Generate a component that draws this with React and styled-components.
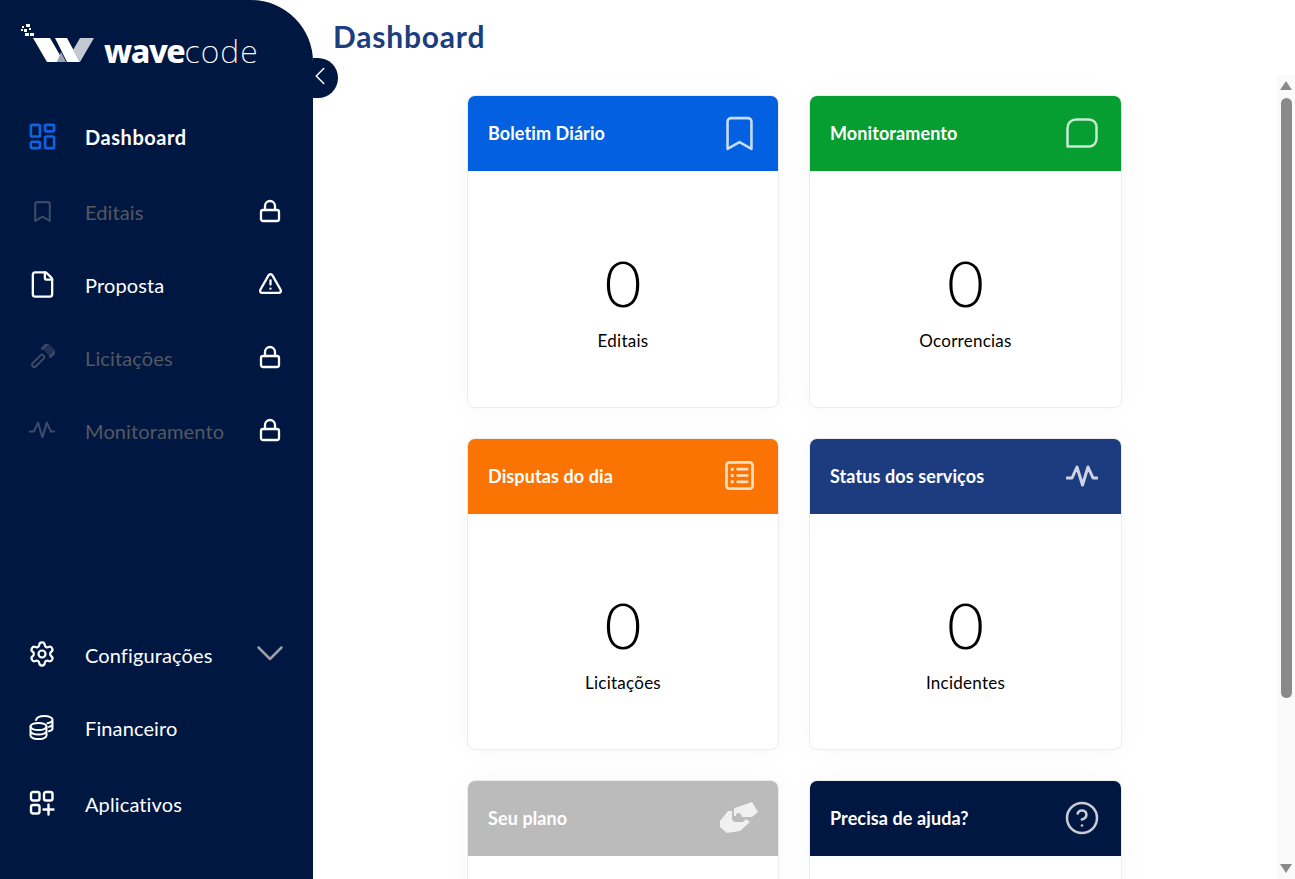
import styled, { createGlobalStyle } from "styled-components"
import {
  Bookmark,
  ChevronLeft,
  CircleHelp,
  File,
  LayoutDashboard,
  Lock,
  Settings,
  TriangleAlert,
} from "lucide-react"

const GlobalStyle = createGlobalStyle`
  html, body, #root {
    margin: 0;
    height: 100%;
  }
  body {
    overflow: hidden;
    font-family: Lato, "Noto Sans", "Liberation Sans", sans-serif;
    background: #fff;
  }
`

function PulseIcon({ width = 32, stroke = 3 }) {
  return (
    <svg width={width} height={(width * 22) / 32} viewBox="0 0 32 22" fill="none" stroke="currentColor" strokeWidth={stroke} strokeLinecap="round" strokeLinejoin="round">
      <path d="M1 13h5l5-11 5.500 18L22 2l5 11h4" />
    </svg>
  )
}

function GavelIcon() {
  return (
    <svg width="26" height="26" viewBox="0 0 26 26" fill="currentColor">
      <g transform="rotate(45 13 13)">
        <rect x="8.500" y="-1" width="9" height="8" fillOpacity="0.55" />
        <rect x="6" y="-2" width="2.600" height="10" rx="1" />
        <rect x="17.400" y="-2" width="2.600" height="10" rx="1" />
        <rect x="10.800" y="11" width="4.400" height="15" rx="1.500" fill="none" stroke="currentColor" strokeWidth="2" />
      </g>
    </svg>
  )
}

function CoinsIcon() {
  return (
    <svg width="26" height="26" viewBox="0 0 26 26" fill="none" stroke="currentColor" strokeWidth="2" strokeLinecap="round">
      <ellipse cx="9.500" cy="12.500" rx="8" ry="3.600" />
      <path d="M1.500 12.500v9c0 2 3.600 3.600 8 3.600s8-1.600 8-3.600v-9M1.500 17c0 2 3.600 3.600 8 3.600s8-1.600 8-3.600" />
      <path d="M7 6c.5-2 3.600-4 8.500-4 4.600 0 8 1.600 8 3.600s-2.200 3.200-5 3.600M23.500 5.600V10c0 1.300-1.600 2.400-3.500 2.900M23.500 10v4.500c0 1.200-1.400 2.200-3.500 2.700" />
    </svg>
  )
}

function AppsPlusIcon() {
  return (
    <svg width="26" height="26" viewBox="0 0 26 26" fill="none" stroke="currentColor" strokeWidth="2.400" strokeLinecap="round" strokeLinejoin="round">
      <rect x="2" y="2" width="8.500" height="8.500" rx="2" />
      <rect x="15" y="2" width="8.500" height="8.500" rx="2" />
      <rect x="2" y="15" width="8.500" height="8.500" rx="2" />
      <path d="M19.500 14.500v10M14.500 19.500h10" />
    </svg>
  )
}

function ChevronWide() {
  return (
    <svg width="26" height="15" viewBox="0 0 26 15" fill="none" stroke="#9c9ea3" strokeWidth="2.500" strokeLinecap="round" strokeLinejoin="round">
      <path d="M1.500 1.500 13 13 24.500 1.500" />
    </svg>
  )
}

function SquareTailIcon() {
  return (
    <svg width="32" height="30" viewBox="0 0 32 30" fill="none" stroke="currentColor" strokeWidth="2.500" strokeLinejoin="round">
      <path d="M1.500 28.500V10a8.500 8.500 0 0 1 8.500-8.500h13A7.500 7.500 0 0 1 30.500 9v12a7.500 7.500 0 0 1-7.500 7.500z" />
    </svg>
  )
}

function ListBoxIcon() {
  return (
    <svg width="29" height="29" viewBox="0 0 30 30" fill="none" stroke="currentColor" strokeWidth="2.800" strokeLinecap="round">
      <rect x="1.500" y="1.500" width="27" height="27" rx="3" />
      <path d="M13 8.500h10M13 15h10M13 21.500h10" />
      <path d="M6 8.500h3M6 15h3M6 21.500h3" strokeWidth="3.200" strokeLinecap="butt" />
    </svg>
  )
}

function HandshakeIcon() {
  return (
    <svg width="40" height="34" viewBox="0 0 40 34" fill="currentColor">
      <path d="M15 8q1-2 4-2L33 1l6 10-6 5H23q-1-4-4-4-2 0-2 3h-2z" />
      <path d="M1 20 9 10h4v7q0 4 4 4h7l3-3 4 3-10 9-13 2-7-6z" />
    </svg>
  )
}

function Logo() {
  return (
    <LogoRow>
      <LogoDots width="14" height="14" viewBox="0 0 14 14" fill="#fff">
        <rect x="1" y="3" width="2" height="2" />
        <rect x="5" y="1" width="4" height="3" />
        <rect x="0" y="6" width="2" height="2" />
        <rect x="3" y="6" width="3" height="3" />
        <rect x="4" y="10" width="4" height="3" />
        <rect x="9" y="10" width="4" height="3" />
        <rect x="8" y="5" width="2" height="2" />
      </LogoDots>
      <svg width="61" height="24" viewBox="0 0 61 24">
        <polygon points="0,0 17,0 31,24 14,24" fill="#fff" />
        <polygon points="22,0 34,0 47,24 34,24" fill="#fff" />
        <polygon points="24,24 33,24 28,14" fill="#9aa3b8" />
        <polygon points="40,12 47,0 61,0 47,24" fill="#c3c8d3" />
      </svg>
      <LogoText><b>wave</b>code</LogoText>
    </LogoRow>
  )
}

const navTop = [
  { label: "Dashboard", icon: <LayoutDashboard size={31} strokeWidth={2} />, iconColor: "#0b63e5", active: true, extra: 2 },
  { label: "Editais", icon: <Bookmark size={25} strokeWidth={2} />, locked: true, muted: true },
  { label: "Proposta", icon: <File size={29} strokeWidth={1.9} />, side: <TriangleAlert size={25} strokeWidth={2.2} /> },
  { label: "Licitações", icon: <GavelIcon />, locked: true, muted: true },
  { label: "Monitoramento", icon: <PulseIcon width={26} stroke={2.600} />, locked: true, muted: true },
]

const navBottom = [
  { label: "Configurações", icon: <Settings size={28} strokeWidth={1.900} />, side: <ChevronWide /> },
  { label: "Financeiro", icon: <CoinsIcon />, extra: 3 },
  { label: "Aplicativos", icon: <AppsPlusIcon /> },
]

const cards = [
  { title: "Boletim Diário", color: "#0360e0", icon: <Bookmark size={41} strokeWidth={1.500} />, value: 0, label: "Editais" },
  { title: "Monitoramento", color: "#079e31", icon: <SquareTailIcon />, value: 0, label: "Ocorrencias" },
  { title: "Disputas do dia", color: "#fb7303", icon: <ListBoxIcon />, value: 0, label: "Licitações" },
  { title: "Status dos serviços", color: "#1c3c7f", icon: <PulseIcon />, value: 0, label: "Incidentes" },
  { title: "Seu plano", color: "#bbbbbb", icon: <HandshakeIcon /> },
  { title: "Precisa de ajuda?", color: "#001742", icon: <CircleHelp size={36} strokeWidth={1.700} /> },
]

function NavItem({ item }) {
  return (
    <NavRow $extra={item.extra}>
      <NavIcon $muted={item.muted} $color={item.iconColor}>{item.icon}</NavIcon>
      <NavLabel $muted={item.muted} $active={item.active}>{item.label}</NavLabel>
      <NavSide>{item.locked ? <Lock size={24} strokeWidth={2.300} /> : item.side}</NavSide>
    </NavRow>
  )
}

export default function App() {
  return (
    <Page>
      <GlobalStyle />
      <Sidebar>
        <Logo />
        <Collapse><ChevronLeft size={30} strokeWidth={1.200} /></Collapse>
        <Nav>
          {navTop.map((item) => <NavItem key={item.label} item={item} />)}
        </Nav>
        <Nav>
          {navBottom.map((item) => <NavItem key={item.label} item={item} />)}
        </Nav>
      </Sidebar>
      <Main>
        <Title>Dashboard</Title>
        <Scroller>
          <CardArea>
            <CardGrid>
              {cards.map((card) => (
                <Card key={card.title}>
                  <CardHead $color={card.color}>
                    <CardTitle>{card.title}</CardTitle>
                    <CardIcon>{card.icon}</CardIcon>
                  </CardHead>
                  <CardBody>
                    {card.label && <Value>{card.value}</Value>}
                    {card.label && <ValueLabel>{card.label}</ValueLabel>}
                  </CardBody>
                </Card>
              ))}
            </CardGrid>
          </CardArea>
          <ScrollTrack>
            <ScrollArrow $dir="up" />
            <ScrollThumb />
            <ScrollArrow $dir="down" />
          </ScrollTrack>
        </Scroller>
      </Main>
    </Page>
  )
}

const Page = styled.div`
  display: flex;
  height: 100vh;
  overflow: hidden;
`

const Sidebar = styled.aside`
  position: relative;
  z-index: 2;
  flex: 0 0 313px;
  display: flex;
  flex-direction: column;
  padding-bottom: 38px;
  box-sizing: border-box;
  background: #001742;
  border-top-right-radius: 62px;
  color: #fff;
`

const LogoRow = styled.div`
  position: relative;
  display: flex;
  align-items: center;
  height: 101px;
  padding: 0 0 1px 33px;
  box-sizing: border-box;
  gap: 10px;
`

const LogoDots = styled.svg`
  position: absolute;
  left: 21px;
  top: 23px;
`

const LogoText = styled.span`
  font-family: "Noto Sans", sans-serif;
  font-size: 32px;
  font-weight: 200;
  letter-spacing: 1.100px;
  b {
    font-weight: 800;
    letter-spacing: -1.400px;
  }
`

const Collapse = styled.div`
  position: absolute;
  top: 58px;
  right: -25px;
  width: 25px;
  height: 40px;
  display: flex;
  align-items: center;
  background: #001742;
  border-radius: 0 20px 20px 0;
  svg {
    flex: none;
    margin: -5px 0 0 -8px;
  }
`

const Nav = styled.nav`
  display: flex;
  flex-direction: column;
  &:last-child {
    margin-top: auto;
  }
`

const NavRow = styled.div`
  display: grid;
  grid-template-columns: 85px 1fr 40px;
  align-items: center;
  height: 73px;
  margin-bottom: ${(p) => p.$extra || 0}px;
  padding-right: 23px;
`

const NavIcon = styled.span`
  display: flex;
  justify-content: center;
  width: 26px;
  margin: -3px 0 0 29px;
  color: ${(p) => p.$color || (p.$muted ? "#3d4a66" : "#fff")};
  svg {
    flex: none;
  }
`

const NavLabel = styled.span`
  margin-top: -2px;
  font-size: 20px;
  font-weight: ${(p) => (p.$active ? 700 : 400)};
  letter-spacing: ${(p) => (p.$active ? 0.55 : 0.12)}px;
  color: ${(p) => (p.$muted ? "#55585f" : "#fff")};
`

const NavSide = styled.span`
  display: flex;
  justify-content: center;
  margin-top: -4px;
`

const Main = styled.main`
  flex: 1;
  min-width: 0;
  display: flex;
  flex-direction: column;
`

const Title = styled.h1`
  margin: 0;
  height: 75px;
  padding: 16px 0 0 20px;
  box-sizing: border-box;
  font-size: 30px;
  line-height: 40px;
  font-weight: 700;
  letter-spacing: 0.8px;
  color: #1c3d7e;
`

const Scroller = styled.div`
  flex: 1;
  min-height: 0;
  display: flex;
  overflow: hidden;
`

const CardArea = styled.div`
  flex: 1;
  min-width: 0;
  padding-right: 1px;
  overflow: hidden;
`

const ScrollTrack = styled.div`
  flex: 0 0 18px;
  display: flex;
  flex-direction: column;
  align-items: center;
  padding: 6px 0;
  box-sizing: border-box;
  background: #fafafa;
`

const ScrollArrow = styled.div`
  flex: none;
  width: 0;
  height: 0;
  border-left: 6.5px solid transparent;
  border-right: 6.5px solid transparent;
  ${(p) => (p.$dir === "up" ? "border-bottom: 9px solid #8a8a8a;" : "border-top: 9px solid #8a8a8a;")}
  ${(p) => (p.$dir === "down" ? "margin-top: auto;" : "")}
`

const ScrollThumb = styled.div`
  flex: none;
  width: 11px;
  height: 600px;
  margin-top: 8px;
  background: #8a8a8a;
  border-radius: 6px;
`

const CardGrid = styled.div`
  display: grid;
  grid-template-columns: 312px 313px;
  gap: 30px;
  justify-content: center;
  padding-top: 20.300px;
`

const Card = styled.article`
  height: 312.500px;
  box-sizing: border-box;
  display: flex;
  flex-direction: column;
  overflow: hidden;
  background: #fff;
  border: 1px solid #ececec;
  border-radius: 8px;
  box-shadow: 0 0 30px rgba(0, 0, 0, 0.03);
`

const CardHead = styled.header`
  flex: 0 0 76px;
  display: flex;
  align-items: center;
  justify-content: space-between;
  padding: 0 21px 0 21px;
  margin: -1px -1px 0;
  background: ${(p) => p.$color};
  color: #fff;
`

const CardTitle = styled.h2`
  margin: 0;
  font-size: 18px;
  font-weight: 700;
  letter-spacing: 0.1px;
`

const CardIcon = styled.span`
  display: flex;
  width: 38px;
  justify-content: center;
  opacity: 0.78;
  svg {
    flex: none;
  }
`

const CardBody = styled.div`
  flex: 1;
  display: flex;
  flex-direction: column;
  align-items: center;
  justify-content: center;
  padding-top: 15px;
`

const Value = styled.div`
  font-size: 64px;
  line-height: 80px;
  font-weight: 300;
  color: #000;
`

const ValueLabel = styled.div`
  margin-top: 7px;
  font-size: 17px;
  letter-spacing: 0.25px;
  color: #000;
`
